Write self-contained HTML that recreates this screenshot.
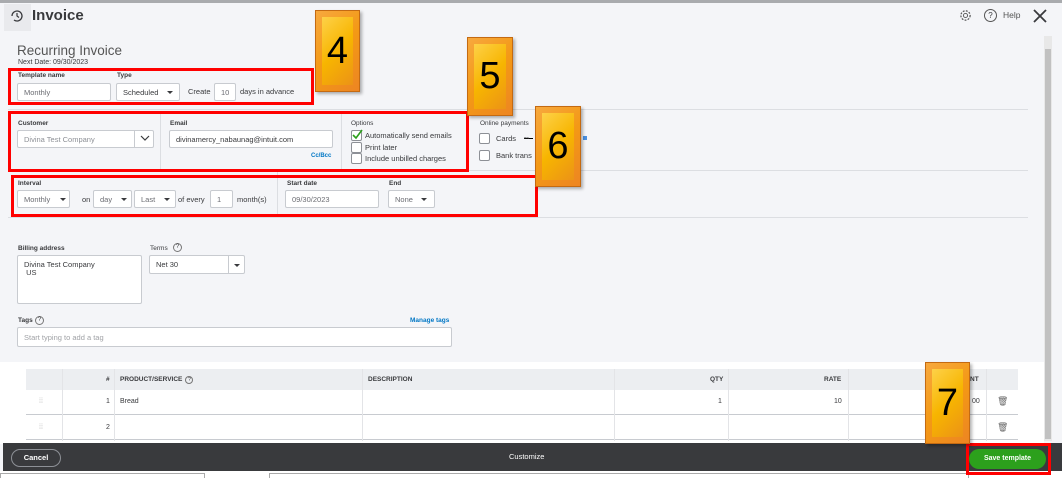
<!DOCTYPE html>
<html><head><style>
*{box-sizing:border-box;margin:0;padding:0}
body{width:1062px;height:478px;overflow:hidden;background:#f4f5f8;font-family:"Liberation Sans",sans-serif;color:#393a3d;position:relative;font-size:8px}
.a{position:absolute}
.inp{position:absolute;background:#fff;border:1px solid #c8cbd0;border-radius:2px;font-size:7.5px;color:#6b6c72;padding-left:6px;display:flex;align-items:center}
.lbl{position:absolute;font-size:6.5px;font-weight:bold;color:#393a3d}
.red{position:absolute;border:3px solid #f00}
.badge{position:absolute;background:linear-gradient(135deg,#ffd85a,#f7b500 50%,#e98a1c);border:1px solid #c46a12;box-shadow:inset 0 0 0 6px rgba(240,130,40,.55),2px 2px 3px rgba(0,0,0,.3);font-size:38px;color:#000;display:flex;align-items:center;justify-content:center}
.cb{position:absolute;width:11px;height:11px;border:1px solid #8d9096;background:#fff;border-radius:2px}
.caret{position:absolute;width:0;height:0;border-left:3px solid transparent;border-right:3px solid transparent;border-top:3px solid #393a3d}
.hr{position:absolute;height:1px;background:#dcdee2}
.th{position:absolute;top:369px;height:21px;font-size:6.5px;font-weight:bold;display:flex;align-items:center}
.td{position:absolute;font-size:7px}
</style></head><body>
<div class="a" style="left:0;top:0;width:1062px;height:3px;background:#a9abae"></div>
<div class="a" style="left:4px;top:4px;width:27px;height:27px;background:#e9eaed"></div>
<svg class="a" style="left:9px;top:8px" width="16" height="16" viewBox="0 0 16 16"><path d="M3 8a5 5 0 1 1 2 4" fill="none" stroke="#393a3d" stroke-width="1.3"/><path d="M8 5v3l2 1.5" fill="none" stroke="#393a3d" stroke-width="1.2"/></svg>
<div class="a" style="left:32px;top:7px;font-size:15px;font-weight:bold">Invoice</div>
<svg class="a" style="left:959px;top:9px" width="13" height="13" viewBox="0 0 14 14"><circle cx="7" cy="7" r="2.2" fill="none" stroke="#555" stroke-width="1"/><circle cx="7" cy="7" r="5" fill="none" stroke="#555" stroke-width="1.3" stroke-dasharray="2 1.4"/></svg>
<div class="a" style="left:984px;top:9px;width:13px;height:13px;border:1.3px solid #555;border-radius:50%;font-size:8px;text-align:center;line-height:11px">?</div>
<div class="a" style="left:1003px;top:10px;font-size:8.5px;color:#555">Help</div>
<svg class="a" style="left:1032px;top:8px" width="16" height="16"><path d="M2 2L14 14M14 2L2 14" stroke="#393a3d" stroke-width="1.8"/></svg>
<div class="a" style="left:1044px;top:36px;width:8px;height:405px;background:#e8e8e8"></div>
<div class="a" style="left:1045px;top:49px;width:6px;height:390px;background:#c1c1c1"></div>

<div class="a" style="left:17px;top:43px;font-size:13.5px;color:#555">Recurring Invoice</div>
<div class="a" style="left:18px;top:59px;font-size:7px">Next Date: 09/30/2023</div>

<div class="lbl" style="left:18px;top:72px">Template name</div>
<div class="inp" style="left:17px;top:83px;width:94px;height:18px">Monthly</div>
<div class="lbl" style="left:117px;top:72px">Type</div>
<div class="inp" style="left:116px;top:83px;width:64px;height:18px;color:#393a3d">Scheduled</div>
<div class="caret" style="left:167px;top:91px"></div>
<div class="a" style="left:188px;top:87px;font-size:7.5px">Create</div>
<div class="inp" style="left:214px;top:83px;width:22px;height:18px">10</div>
<div class="a" style="left:240px;top:87px;font-size:7.5px">days in advance</div>

<div class="hr" style="left:8px;top:109px;width:1020px"></div>
<div class="lbl" style="left:18px;top:120px">Customer</div>
<div class="inp" style="left:17px;top:130px;width:137px;height:18px;color:#8d9096">Divina Test Company</div>
<div class="a" style="left:134px;top:130px;width:1px;height:18px;background:#c8cbd0"></div>
<svg class="a" style="left:140px;top:135px" width="10" height="7"><path d="M1 1l4 4 4-4" fill="none" stroke="#393a3d" stroke-width="1.2"/></svg>
<div class="a" style="left:160px;top:112px;width:1px;height:58px;background:#dcdee2"></div>
<div class="lbl" style="left:170px;top:120px">Email</div>
<div class="inp" style="left:169px;top:130px;width:164px;height:18px;color:#393a3d">divinamercy_nabaunag@intuit.com</div>
<div class="a" style="left:311px;top:153px;font-size:6px;color:#0077c5;font-weight:bold">Cc/Bcc</div>
<div class="a" style="left:341px;top:112px;width:1px;height:58px;background:#dcdee2"></div>
<div class="lbl" style="left:351px;top:120px;font-weight:normal">Options</div>
<div class="cb" style="left:351px;top:130px"></div>
<svg class="a" style="left:352px;top:129px" width="11" height="11"><path d="M1 6l3 3 6-8" fill="none" stroke="#2ca01c" stroke-width="1.6"/></svg>
<div class="a" style="left:365px;top:131px;font-size:7.5px">Automatically send emails</div>
<div class="cb" style="left:351px;top:142px"></div>
<div class="a" style="left:365px;top:143px;font-size:7.5px">Print later</div>
<div class="cb" style="left:351px;top:153px"></div>
<div class="a" style="left:365px;top:154px;font-size:7.5px">Include unbilled charges</div>
<div class="lbl" style="left:480px;top:120px;font-weight:normal">Online payments</div>
<div class="cb" style="left:479px;top:133px"></div>
<div class="a" style="left:496px;top:134px;font-size:7.5px">Cards</div>
<div class="a" style="left:524px;top:135px;width:9px;height:4px;border-bottom:1px solid #000;font-size:4px">ew</div>
<div class="a" style="left:583px;top:136px;width:4px;height:4px;background:#4a90e2"></div>
<div class="cb" style="left:479px;top:150px"></div>
<div class="a" style="left:496px;top:151px;font-size:7.5px">Bank trans</div>

<div class="hr" style="left:8px;top:170px;width:1020px"></div>
<div class="lbl" style="left:18px;top:180px">Interval</div>
<div class="inp" style="left:17px;top:190px;width:53px;height:18px">Monthly</div><div class="caret" style="left:60px;top:198px"></div>
<div class="a" style="left:82px;top:195px;font-size:7.5px">on</div>
<div class="inp" style="left:93px;top:190px;width:39px;height:18px">day</div><div class="caret" style="left:121px;top:198px"></div>
<div class="inp" style="left:134px;top:190px;width:42px;height:18px">Last</div><div class="caret" style="left:164px;top:198px"></div>
<div class="a" style="left:178px;top:195px;font-size:7.5px">of every</div>
<div class="inp" style="left:210px;top:190px;width:23px;height:18px">1</div>
<div class="a" style="left:237px;top:195px;font-size:7.5px">month(s)</div>
<div class="a" style="left:277px;top:172px;width:1px;height:42px;background:#dcdee2"></div>
<div class="lbl" style="left:287px;top:180px">Start date</div>
<div class="inp" style="left:285px;top:190px;width:94px;height:18px">09/30/2023</div>
<div class="lbl" style="left:389px;top:180px">End</div>
<div class="inp" style="left:388px;top:190px;width:47px;height:18px">None</div><div class="caret" style="left:421px;top:198px"></div>
<div class="hr" style="left:8px;top:217px;width:1020px"></div>

<div class="lbl" style="left:18px;top:245px">Billing address</div>
<div class="inp" style="left:17px;top:255px;width:125px;height:49px;align-items:flex-start;padding-top:5px;line-height:8px;color:#393a3d">Divina Test Company<br>&nbsp;US</div>
<div class="lbl" style="left:150px;top:245px;font-weight:normal">Terms</div>
<div class="a" style="left:173px;top:243px;width:9px;height:9px;border:1px solid #777;border-radius:50%;font-size:6px;text-align:center;line-height:7px">?</div>
<div class="inp" style="left:149px;top:255px;width:96px;height:19px;color:#393a3d">Net 30</div>
<div class="a" style="left:228px;top:255px;width:1px;height:19px;background:#c8cbd0"></div>
<div class="caret" style="left:234px;top:264px"></div>
<div class="lbl" style="left:18px;top:317px">Tags</div>
<div class="a" style="left:35px;top:316px;width:9px;height:9px;border:1px solid #777;border-radius:50%;font-size:6px;text-align:center;line-height:7px">?</div>
<div class="a" style="left:410px;top:317px;font-size:6.5px;color:#0077c5;font-weight:bold">Manage tags</div>
<div class="inp" style="left:17px;top:327px;width:435px;height:20px;color:#a0a2a6">Start typing to add a tag</div>

<div class="a" style="left:0;top:362px;width:1044px;height:82px;background:#fff"></div>
<div class="a" style="left:26px;top:369px;width:992px;height:21px;background:#eceef1"></div>
<div class="hr" style="left:26px;top:414px;width:992px;background:#c8cbd0"></div>
<div class="hr" style="left:26px;top:439px;width:992px;background:#c8cbd0"></div>
<div class="a" style="left:62px;top:369px;width:1px;height:72px;background:#e3e4e7"></div>
<div class="a" style="left:114px;top:369px;width:1px;height:72px;background:#e3e4e7"></div>
<div class="a" style="left:362px;top:369px;width:1px;height:72px;background:#e3e4e7"></div>
<div class="a" style="left:614px;top:369px;width:1px;height:72px;background:#e3e4e7"></div>
<div class="a" style="left:728px;top:369px;width:1px;height:72px;background:#e3e4e7"></div>
<div class="a" style="left:848px;top:369px;width:1px;height:72px;background:#e3e4e7"></div>
<div class="a" style="left:986px;top:369px;width:1px;height:72px;background:#e3e4e7"></div>
<div class="th" style="left:106px">#</div>
<div class="th" style="left:120px">PRODUCT/SERVICE <span style="display:inline-block;width:8px;height:8px;border:1px solid #777;border-radius:50%;margin-left:3px;font-size:5px;text-align:center;line-height:6px;font-weight:normal">?</span></div>
<div class="th" style="left:368px">DESCRIPTION</div>
<div class="th" style="left:710px">QTY</div>
<div class="th" style="left:824px">RATE</div>
<div class="th" style="left:970px">NT</div>
<div class="td" style="left:39px;top:398px;color:#bbb">⁞⁞</div>
<div class="td" style="left:106px;top:398px">1</div>
<div class="td" style="left:120px;top:398px">Bread</div>
<div class="td" style="left:718px;top:398px">1</div>
<div class="td" style="left:834px;top:398px">10</div>
<div class="td" style="left:972px;top:398px">00</div>
<div class="td" style="left:997px;top:396px;font-size:9px;color:#666">🗑</div>
<div class="td" style="left:39px;top:424px;color:#bbb">⁞⁞</div>
<div class="td" style="left:106px;top:424px">2</div>
<div class="td" style="left:997px;top:422px;font-size:9px;color:#666">🗑</div>

<div class="a" style="left:3px;top:443px;width:1059px;height:28px;background:#393a3d"></div>
<div class="a" style="left:11px;top:449px;width:50px;height:18px;border:1px solid #8d9096;border-radius:9px;color:#fff;font-size:7.5px;text-align:center;line-height:16px;font-weight:bold">Cancel</div>
<div class="a" style="left:509px;top:452px;color:#fff;font-size:7.5px">Customize</div>
<div class="a" style="left:969px;top:449px;width:77px;height:20px;background:#2ca01c;border-radius:10px;color:#fff;font-size:7px;font-weight:bold;text-align:center;line-height:20px">Save template</div>
<div class="a" style="left:0;top:471px;width:1062px;height:7px;background:#fff"></div>
<div class="a" style="left:0;top:473px;width:205px;height:5px;border:1px solid #aaa;border-bottom:none"></div>
<div class="a" style="left:269px;top:473px;width:700px;height:5px;border:1px solid #aaa;border-bottom:none"></div>

<div class="red" style="left:8px;top:68px;width:306px;height:37px"></div>
<div class="red" style="left:8px;top:111px;width:461px;height:61px"></div>
<div class="red" style="left:11px;top:175px;width:527px;height:42px"></div>
<div class="red" style="left:966px;top:443px;width:85px;height:32px"></div>
<div class="badge" style="left:315px;top:10px;width:45px;height:82px">4</div>
<div class="badge" style="left:467px;top:37px;width:46px;height:79px">5</div>
<div class="badge" style="left:535px;top:106px;width:46px;height:81px">6</div>
<div class="badge" style="left:925px;top:362px;width:45px;height:82px">7</div>
</body></html>
